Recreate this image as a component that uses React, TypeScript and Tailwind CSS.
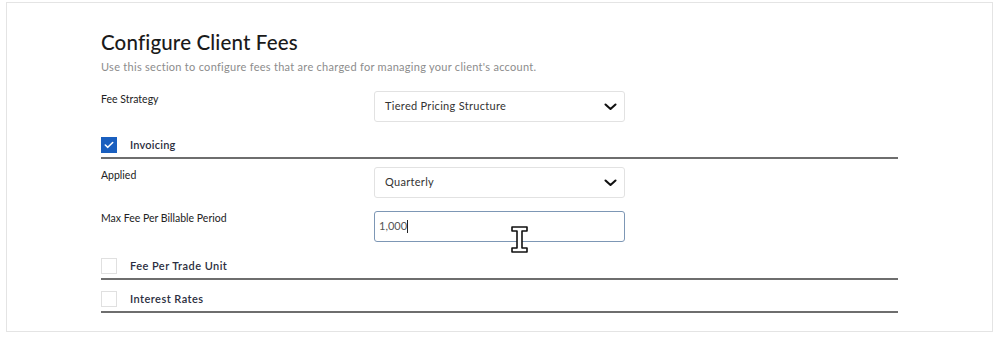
import React from "react";

const Chevron = () => (
  <svg width="13" height="8" viewBox="0 0 13 8" className="shrink-0">
    <path d="M1.5 1.5 L6.5 6 L11.5 1.5" fill="none" stroke="#111" strokeWidth="2.1" strokeLinecap="round" strokeLinejoin="round" />
  </svg>
);

const Select = ({ value }: { value: string }) => (
  <div className="w-[251px] h-[31px] border border-[#e2e2e2] rounded-[3px] bg-white flex items-center justify-between pl-[10px] pr-[7px]">
    <span className="text-[11px] tracking-[0.3px] text-[#333]">{value}</span>
    <Chevron />
  </div>
);

const Check = ({ checked }: { checked?: boolean }) =>
  checked ? (
    <div className="w-[16px] h-[16px] bg-[#1a5fbf] flex items-center justify-center">
      <svg width="10" height="8" viewBox="0 0 10 8">
        <path d="M1.3 4 L3.8 6.3 L8.7 1.5" fill="none" stroke="#fff" strokeWidth="1.6" strokeLinecap="round" strokeLinejoin="round" />
      </svg>
    </div>
  ) : (
    <div className="w-[16px] h-[16px] border border-[#e0e0e0] bg-white" />
  );

export default function App() {
  return (
    <div className="w-[1000px] h-[337px] bg-white pt-[2px] pl-[6px] font-['Lato',sans-serif]">
      <div className="relative w-[987px] h-[330px] border border-[#e4e4e4] bg-white pl-[94px] pt-[27px]">
        <div className="text-[20.5px] leading-[24px] tracking-[0.15px] font-medium text-[#1a1a1a]">Configure Client Fees</div>
        <div className="mt-[6px] text-[11px] leading-[14px] tracking-[0.28px] text-[#8c8c8c]">
          Use this section to configure fees that are charged for managing your client's account.
        </div>

        <div className="mt-[17px] flex">
          <div className="w-[273px] pt-[1px] text-[10.5px] leading-[14px] text-[#222]">Fee Strategy</div>
          <Select value="Tiered Pricing Structure" />
        </div>

        <div className="mt-[15px] flex items-center h-[16px]">
          <Check checked />
          <span className="ml-[13px] text-[11px] tracking-[0.2px] font-semibold text-[#2b2e40]">Invoicing</span>
        </div>
        <div className="mt-[4px] w-[797px] h-[2px] bg-[#6e6e6e]" />

        <div className="mt-[8px] flex">
          <div className="w-[273px] pt-[1px] text-[10.5px] leading-[14px] text-[#222]">Applied</div>
          <Select value="Quarterly" />
        </div>

        <div className="mt-[13px] flex">
          <div className="w-[273px] pt-[0px] text-[10.5px] leading-[14px] text-[#222]">Max Fee Per Billable Period</div>
          <div className="w-[251px] h-[31px] border border-[#7d97b5] rounded-[3px] bg-white flex items-center pl-[4px]">
            <span className="text-[11px] text-[#555]">1,000</span>
            <span className="w-[1px] h-[13px] bg-[#222]" />
          </div>
        </div>

        <div className="mt-[16px] flex items-center h-[16px]">
          <Check />
          <span className="ml-[13px] text-[11px] tracking-[0.45px] font-semibold text-[#2b2e40]">Fee Per Trade Unit</span>
        </div>
        <div className="mt-[4px] w-[797px] h-[2px] bg-[#6e6e6e]" />

        <div className="mt-[11px] flex items-center h-[16px]">
          <Check />
          <span className="ml-[13px] text-[11px] tracking-[0.45px] font-semibold text-[#2b2e40]">Interest Rates</span>
        </div>
        <div className="mt-[4px] w-[797px] h-[2px] bg-[#6e6e6e]" />

        <svg className="absolute left-[504px] top-[223px]" width="17" height="27" viewBox="0 0 17 27">
          <path
            d="M1 1 H16 V5 H11 V22 H16 V26 H1 V22 H6 V5 H1 Z"
            fill="#fff"
            stroke="#111"
            strokeWidth="1.6"
            strokeLinejoin="round"
          />
        </svg>
      </div>
    </div>
  );
}
